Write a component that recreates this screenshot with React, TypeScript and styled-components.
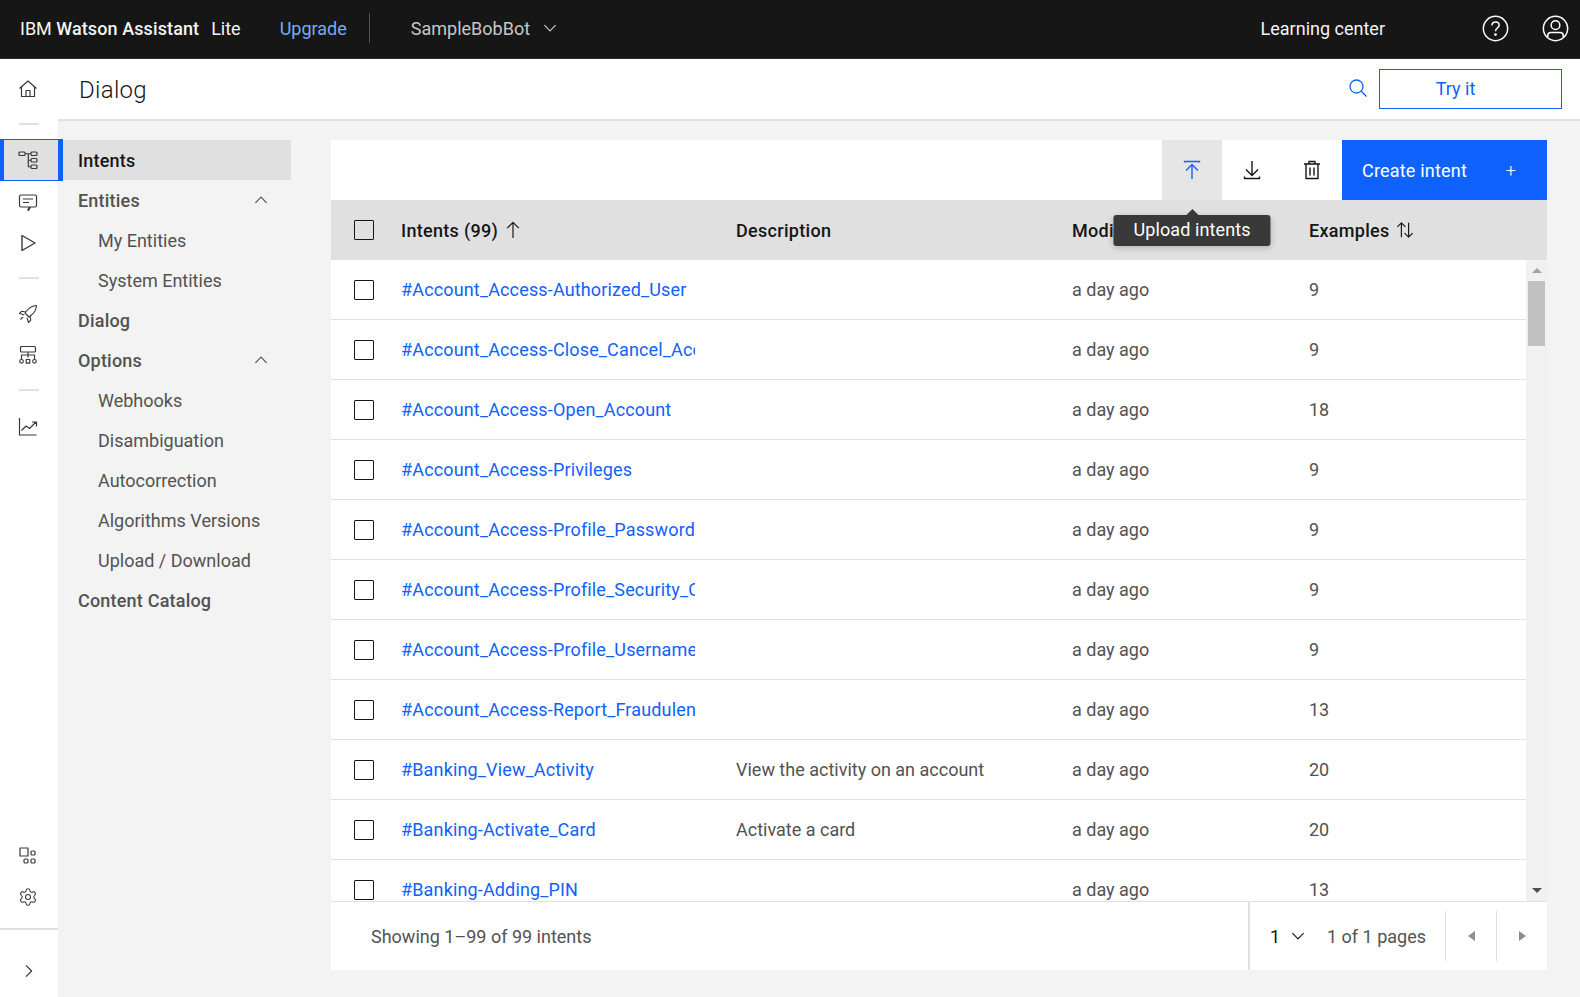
import React from "react";
import styled, { createGlobalStyle } from "styled-components";
import { Settings } from "lucide-react";

const FONT = `Roboto, "Noto Sans", sans-serif`;
const COLUMNS = "70px 335px 336px 237px 1fr";

const rows = [
  { name: "#Account_Access-Authorized_User", description: "", examples: 9 },
  { name: "#Account_Access-Close_Cancel_Account", description: "", examples: 9 },
  { name: "#Account_Access-Open_Account", description: "", examples: 18 },
  { name: "#Account_Access-Privileges", description: "", examples: 9 },
  { name: "#Account_Access-Profile_Password", description: "", examples: 9 },
  { name: "#Account_Access-Profile_Security_Questions", description: "", examples: 9 },
  { name: "#Account_Access-Profile_Username", description: "", examples: 9 },
  { name: "#Account_Access-Report_Fraudulent", description: "", examples: 13 },
  { name: "#Banking_View_Activity", description: "View the activity on an account", examples: 20 },
  { name: "#Banking-Activate_Card", description: "Activate a card", examples: 20 },
  { name: "#Banking-Adding_PIN", description: "", examples: 13 },
];

const navItems = [
  { label: "Intents", level: 0, selected: true },
  { label: "Entities", level: 0, open: true },
  { label: "My Entities", level: 1 },
  { label: "System Entities", level: 1 },
  { label: "Dialog", level: 0 },
  { label: "Options", level: 0, open: true },
  { label: "Webhooks", level: 1 },
  { label: "Disambiguation", level: 1 },
  { label: "Autocorrection", level: 1 },
  { label: "Algorithms Versions", level: 1 },
  { label: "Upload / Download", level: 1 },
  { label: "Content Catalog", level: 0 },
];

const GlobalStyle = createGlobalStyle`
  html, body {
    margin: 0;
    padding: 0;
    background: #f3f3f3;
    font-family: ${FONT};
  }
  * {
    box-sizing: border-box;
  }
`;

const Svg = ({ size = 20, color = "currentColor", width = 1.2, children }: { size?: number; color?: string; width?: number; children: React.ReactNode }) => (
  <svg width={size} height={size} viewBox="0 0 20 20" fill="none" stroke={color} strokeWidth={width} strokeLinejoin="round">
    {children}
  </svg>
);

const HomeIcon = () => (
  <Svg>
    <path d="M1.5 9.500 10 2l8.500 7.500M3.500 8v9.500h13V8M8 17.500V11.500h4v6" />
  </Svg>
);
const TreeIcon = () => (
  <Svg>
    <rect x="1" y="2" width="6" height="3.500" rx="1" />
    <rect x="13" y="2" width="6" height="3.500" rx="1" />
    <rect x="13" y="8.500" width="6" height="3.500" rx="1" />
    <rect x="13" y="15" width="6" height="3.500" rx="1" />
    <path d="M7 3.750H13M10.300 3.750V16.750H13M10.300 10.250H13" />
  </Svg>
);
const ChatIcon = () => (
  <Svg>
    <path d="M3 3h14a1.500 1.500 0 0 1 1.500 1.500v9A1.500 1.500 0 0 1 17 15h-4.500l-2 3.500-.6-.4L11.300 15H3a1.500 1.500 0 0 1-1.500-1.500v-9A1.500 1.500 0 0 1 3 3Z" />
    <path d="M5 7h10M5 10.500h6" />
  </Svg>
);
const PlayIcon = () => (
  <Svg width={1.4}>
    <path d="M4 2.500v15L17 10Z" />
  </Svg>
);
const RocketIcon = () => (
  <Svg width={1.1}>
    <path d="M18.500 1.500c-4 .3-7 1.800-9.500 5l-2 2.500 4 4 2.500-2c3.200-2.500 4.700-5.500 5-9.500Z" />
    <path d="M7.800 8 3.800 7.200 1.500 9.500 6.300 11M12 12.200l.8 4-2.300 2.300L9 13.700M5 13l-2.500 2.500" />
  </Svg>
);
const DeployIcon = () => (
  <Svg>
    <rect x="2.500" y="1.500" width="15" height="5.500" rx="1" />
    <path d="M5 4.250h.01M10 7v5.500M3.500 14.500V10h13v4.500" />
    <circle cx="3.500" cy="16.300" r="1.800" />
    <rect x="8.200" y="14.500" width="3.600" height="3.600" />
    <circle cx="16.500" cy="16.300" r="1.800" />
  </Svg>
);
const ChartIcon = () => (
  <Svg>
    <path d="M1.500 2v17h17" />
    <path d="M3.500 14.500l4.500-4.500 3.500 2.500L18 6M14 6h4.500v4.500" />
  </Svg>
);
const AppsIcon = () => (
  <Svg>
    <rect x="2" y="2" width="8" height="8" />
    <rect x="13" y="5" width="4" height="4" rx="1" />
    <rect x="6" y="13" width="4" height="4" rx="1" />
    <rect x="13" y="13" width="4" height="4" rx="1" />
  </Svg>
);
const ChevronDownIcon = ({ size = 16 }: { size?: number }) => (
  <Svg size={size} width={1.5}>
    <path d="M3 6.500 10 13.500 17 6.500" />
  </Svg>
);
const ChevronUpIcon = () => (
  <Svg size={16} width={1.5}>
    <path d="M3 13.500 10 6.500 17 13.500" />
  </Svg>
);
const ChevronRightIcon = () => (
  <Svg size={16} width={1.500}>
    <path d="M7.500 3 14.500 10 7.500 17" />
  </Svg>
);
const HelpIcon = () => (
  <Svg size={27} width={1.1}>
    <circle cx="10" cy="10" r="9" />
    <path d="M7.400 7.700c0-1.500 1.200-2.500 2.700-2.500s2.600 1 2.600 2.300c0 2.100-2.700 2.200-2.700 4.500" />
    <circle cx="10" cy="14.500" r=".5" fill="currentColor" />
  </Svg>
);
const UserIcon = () => (
  <Svg size={27} width={1.1}>
    <circle cx="10" cy="10" r="9" />
    <circle cx="10" cy="7.500" r="3.200" />
    <path d="M4.300 16.500v-1.300c0-1.300 1-2.200 2.300-2.200h6.800c1.300 0 2.300.9 2.300 2.200v1.300" />
  </Svg>
);
const SearchIcon = () => (
  <Svg size={20} width={1.3}>
    <circle cx="8.500" cy="8.500" r="6.500" />
    <path d="m13.300 13.300 5.200 5.200" />
  </Svg>
);
const UploadIcon = () => (
  <Svg width={1.4}>
    <path d="M2.500 2.500v-1h15v1M10 19V5M4 10.500 10 4.500l6 6" />
  </Svg>
);
const DownloadIcon = () => (
  <Svg width={1.4}>
    <path d="M10 1v14M4 9.500l6 6 6-6M2.500 16.500v2h15v-2" />
  </Svg>
);
const TrashIcon = () => (
  <Svg width={1.4}>
    <path d="M2 4h16M7 4V1.500h6V4M4 4v14.500h12V4M8 7.500v8M12 7.500v8" />
  </Svg>
);
const ArrowUpIcon = () => (
  <Svg size={18} width={1.300}>
    <path d="M10 19V1.500M3.500 8 10 1.500 16.500 8" />
  </Svg>
);
const SortIcon = () => (
  <Svg size={18} width={1.300}>
    <path d="M6 18V2M1.500 6.500 6 2l4.500 4.500M14 2v16M9.500 13.500 14 18l4.500-4.500" />
  </Svg>
);

const Page = styled.div`
  display: flex;
  flex-direction: column;
  height: 997px;
  overflow: hidden;
  color: #525252;
`;

const TopBar = styled.header`
  display: flex;
  align-items: center;
  flex: 0 0 59px;
  padding: 0 11px 2px 20px;
  background: #161616;
  color: #f4f4f4;
  font-size: 18px;
  border-bottom: 1px solid #2d2d2d;
`;

const Brand = styled.div`
  white-space: nowrap;

  b {
    font-weight: 500;
    letter-spacing: 0.1px;
  }
`;

const Plan = styled.span`
  margin-left: 12px;
`;

const Upgrade = styled.a`
  margin-left: 39px;
  color: #78a9ff;
`;

const BarDivider = styled.div`
  width: 1px;
  height: 30px;
  margin: 0 41px 0 22px;
  background: #525252;
`;

const BotPicker = styled.div`
  display: flex;
  align-items: center;
  gap: 12px;
  color: #c6c6c6;
`;

const LearningCenter = styled.a`
  margin-left: auto;
  margin-right: 64px;
  color: #f4f4f4;
`;

const BarIcon = styled.div`
  display: flex;
  margin-left: 33px;
  color: #ffffff;

  &:first-of-type {
    margin-left: 0;
  }
`;

const Body = styled.div`
  display: flex;
  flex: 1;
  min-height: 0;
`;

const Rail = styled.nav`
  display: flex;
  flex-direction: column;
  flex: 0 0 58px;
  width: 58px;
  min-width: 0;
  padding: 9px 0 6px;
  background: #ffffff;
  color: #393939;
`;

const RailItem = styled.div<{ $active?: boolean }>`
  display: flex;
  align-items: center;
  justify-content: center;
  position: relative;
  z-index: 1;
  flex: 0 0 ${(p) => (p.$active ? 42 : 41)}px;
  width: ${(p) => (p.$active ? 63 : 58)}px;
  padding-right: 2px;
  ${(p) =>
    p.$active &&
    `
    padding-right: 6px;
    background: #e0e0e0;
    border: 1px solid #0f62fe;
    border-left-width: 4px;
    border-right-width: 5px;
  `}
`;

const RailRule = styled.div`
  flex: 0 0 2px;
  width: 20px;
  margin: 14px 19px;
  background: #e0e0e0;
`;

const RailFoot = styled.div`
  display: flex;
  flex-direction: column;
  margin-top: auto;
`;

const RailFootRule = styled.div`
  flex: 0 0 2px;
  margin: 11px 0 20px;
  background: #e0e0e0;
`;

const Content = styled.div`
  display: flex;
  flex-direction: column;
  flex: 1;
  min-width: 0;
`;

const SubHeader = styled.div`
  display: flex;
  align-items: center;
  flex: 0 0 62px;
  padding: 0 18px 2px 21px;
  background: #ffffff;
  border-bottom: 2px solid #e0e0e0;
`;

const PageTitle = styled.h1`
  margin: 3px 0 0;
  color: #161616;
  font-size: 24px;
  font-weight: 300;
  letter-spacing: 0.3px;
`;

const SearchButton = styled.div`
  display: flex;
  margin-left: auto;
  margin-right: 11px;
  color: #0f62fe;
`;

const TryButton = styled.button`
  width: 183px;
  height: 40px;
  margin-top: 1px;
  padding: 0 30px 0 0;
  background: #ffffff;
  border: 1.5px solid #0f62fe;
  color: #0f62fe;
  font-family: ${FONT};
  font-size: 18px;
`;

const Workspace = styled.div`
  display: flex;
  flex: 1;
  min-height: 0;
  padding: 19px 33px 27px 5px;
`;

const SideNav = styled.ul`
  flex: 0 0 228px;
  margin: 0 40px 0 0;
  padding: 0;
  list-style: none;
`;

const SideNavItem = styled.li<{ $level: number; $selected?: boolean }>`
  display: flex;
  align-items: center;
  justify-content: space-between;
  height: 40px;
  padding: 0 22px 0 ${(p) => (p.$level ? 35 : 15)}px;
  font-size: 18px;
  font-weight: ${(p) => (p.$level ? 400 : 500)};
  letter-spacing: ${(p) => (p.$level ? 0 : 0.2)}px;
  color: ${(p) => (p.$selected ? "#161616" : "#525252")};
  background: ${(p) => (p.$selected ? "#e0e0e0" : "transparent")};
`;

const Main = styled.main`
  display: flex;
  flex-direction: column;
  flex: 1;
  min-width: 0;
`;

const Toolbar = styled.div`
  display: flex;
  justify-content: flex-end;
  flex: 0 0 60px;
  background: #ffffff;
`;

const ToolButton = styled.div<{ $active?: boolean }>`
  display: flex;
  align-items: center;
  justify-content: center;
  position: relative;
  width: 60px;
  color: ${(p) => (p.$active ? "#0f62fe" : "#161616")};
  background: ${(p) => (p.$active ? "#e5e5e5" : "#ffffff")};
`;

const Tooltip = styled.div`
  position: absolute;
  z-index: 3;
  top: 75px;
  left: 50%;
  transform: translateX(-50%);
  padding: 0 20px;
  height: 31px;
  line-height: 30px;
  letter-spacing: 0.1px;
  white-space: nowrap;
  border-radius: 3px;
  background: #393939;
  color: #ffffff;
  font-size: 18px;
  box-shadow: 0 2px 6px rgba(0, 0, 0, 0.2);

  &::before {
    content: "";
    position: absolute;
    top: -6px;
    left: 50%;
    margin-left: -6px;
    border: 6px solid transparent;
    border-top: 0;
    border-bottom-color: #393939;
  }
`;

const CreateButton = styled.div`
  display: flex;
  align-items: center;
  justify-content: space-between;
  width: 205px;
  padding: 0 31px 0 20px;
  background: #0f62fe;
  color: #ffffff;
  font-size: 18px;
  letter-spacing: 0.2px;

  span {
    font-weight: 300;
  }
`;

const HeaderRow = styled.div`
  display: grid;
  grid-template-columns: ${COLUMNS};
  align-items: center;
  flex: 0 0 60px;
  background: #e0e0e0;
  color: #161616;
  font-size: 18px;
  font-weight: 500;
  letter-spacing: 0.3px;
`;

const HeaderLabel = styled.div`
  display: flex;
  align-items: center;
  gap: 6px;
  white-space: nowrap;
`;

const Check = styled.span`
  display: block;
  width: 20px;
  height: 20px;
  margin-left: 23px;
  background: #ffffff;
  border: 1.5px solid #161616;
  border-radius: 1px;
`;

const HeaderCheck = styled(Check)`
  background: transparent;
`;

const ListArea = styled.div`
  display: flex;
  flex: 1;
  min-height: 0;
  background: #ffffff;
`;

const RowList = styled.div`
  flex: 1;
  min-width: 0;
  overflow: hidden;
`;

const ScrollTrack = styled.div`
  display: flex;
  flex-direction: column;
  flex: 0 0 21px;
  background: #f1f1f1;
`;

const ScrollArrow = styled.div<{ $down?: boolean }>`
  display: flex;
  align-items: center;
  justify-content: center;
  flex: 0 0 21px;
  color: ${(p) => (p.$down ? "#505050" : "#a3a3a3")};

  &::before {
    content: "";
    border: 5px solid transparent;
    border-${(p) => (p.$down ? "bottom" : "top")}-width: 0;
    border-${(p) => (p.$down ? "top" : "bottom")}-width: 5px;
    border-${(p) => (p.$down ? "top" : "bottom")}-color: currentColor;
  }
`;

const ScrollThumb = styled.div`
  flex: 0 0 65px;
  margin: 0 2px;
  background: #c1c1c1;
`;

const ScrollRest = styled.div`
  flex: 1;
`;

const Row = styled.div`
  display: grid;
  grid-template-columns: ${COLUMNS};
  align-items: center;
  height: 60px;
  border-bottom: 1px solid #e0e0e0;
  font-size: 18px;
`;

const NameCell = styled.a`
  overflow: hidden;
  margin-right: 41px;
  white-space: nowrap;
  letter-spacing: 0.15px;
  color: #0f62fe;
`;

const Footer = styled.div`
  display: flex;
  align-items: center;
  flex: 0 0 69px;
  padding-left: 40px;
  background: #ffffff;
  border-top: 1px solid #e0e0e0;
  font-size: 18px;
`;

const Pager = styled.div`
  display: flex;
  align-items: center;
  align-self: stretch;
  margin-left: auto;
  padding-left: 20px;
  border-left: 2px solid #e0e0e0;
`;

const PageSelect = styled.div`
  display: flex;
  align-items: center;
  gap: 10px;
  margin-right: 21px;
  color: #161616;
`;

const PageCount = styled.span`
  margin-right: 19px;
`;

const PagerStep = styled.div`
  display: flex;
  align-items: center;
  justify-content: center;
  width: 51px;
  height: 50px;
  border-left: 1.5px solid #e0e0e0;
  color: #8d8d8d;
`;

const Caret = styled.span<{ $right?: boolean }>`
  width: 0;
  height: 0;
  border: 5px solid transparent;
  border-${(p) => (p.$right ? "right" : "left")}-width: 0;
  border-${(p) => (p.$right ? "left" : "right")}-color: currentColor;
  border-${(p) => (p.$right ? "left" : "right")}-width: 7px;
`;

const App = () => {
  return (
    <Page>
      <GlobalStyle />
      <TopBar>
        <Brand>
          IBM <b>Watson Assistant</b>
          <Plan>Lite</Plan>
        </Brand>
        <Upgrade>Upgrade</Upgrade>
        <BarDivider />
        <BotPicker>
          SampleBobBot
          <ChevronDownIcon />
        </BotPicker>
        <LearningCenter>Learning center</LearningCenter>
        <BarIcon>
          <HelpIcon />
        </BarIcon>
        <BarIcon>
          <UserIcon />
        </BarIcon>
      </TopBar>
      <Body>
        <Rail>
          <RailItem>
            <HomeIcon />
          </RailItem>
          <RailRule />
          <RailItem $active>
            <TreeIcon />
          </RailItem>
          <RailItem>
            <ChatIcon />
          </RailItem>
          <RailItem>
            <PlayIcon />
          </RailItem>
          <RailRule />
          <RailItem>
            <RocketIcon />
          </RailItem>
          <RailItem>
            <DeployIcon />
          </RailItem>
          <RailRule />
          <RailItem>
            <ChartIcon />
          </RailItem>
          <RailFoot>
            <RailItem>
              <AppsIcon />
            </RailItem>
            <RailItem>
              <Settings size={20} strokeWidth={1.3} />
            </RailItem>
            <RailFootRule />
            <RailItem>
              <ChevronRightIcon />
            </RailItem>
          </RailFoot>
        </Rail>
        <Content>
          <SubHeader>
            <PageTitle>Dialog</PageTitle>
            <SearchButton>
              <SearchIcon />
            </SearchButton>
            <TryButton>Try it</TryButton>
          </SubHeader>
          <Workspace>
            <SideNav>
              {navItems.map((item) => (
                <SideNavItem key={item.label} $level={item.level} $selected={item.selected}>
                  {item.label}
                  {item.open && <ChevronUpIcon />}
                </SideNavItem>
              ))}
            </SideNav>
            <Main>
              <Toolbar>
                <ToolButton $active>
                  <UploadIcon />
                  <Tooltip>Upload intents</Tooltip>
                </ToolButton>
                <ToolButton>
                  <DownloadIcon />
                </ToolButton>
                <ToolButton>
                  <TrashIcon />
                </ToolButton>
                <CreateButton>
                  Create intent
                  <span>+</span>
                </CreateButton>
              </Toolbar>
              <HeaderRow>
                <HeaderCheck />
                <HeaderLabel>
                  Intents (99)
                  <ArrowUpIcon />
                </HeaderLabel>
                <HeaderLabel>Description</HeaderLabel>
                <HeaderLabel>Modified</HeaderLabel>
                <HeaderLabel>
                  Examples
                  <SortIcon />
                </HeaderLabel>
              </HeaderRow>
              <ListArea>
                <RowList>
                  {rows.map((row) => (
                    <Row key={row.name}>
                      <Check />
                      <NameCell>{row.name}</NameCell>
                      <span>{row.description}</span>
                      <span>a day ago</span>
                      <span>{row.examples}</span>
                    </Row>
                  ))}
                </RowList>
                <ScrollTrack>
                  <ScrollArrow />
                  <ScrollThumb />
                  <ScrollRest />
                  <ScrollArrow $down />
                </ScrollTrack>
              </ListArea>
              <Footer>
                Showing 1–99 of 99 intents
                <Pager>
                  <PageSelect>
                    1
                    <ChevronDownIcon />
                  </PageSelect>
                  <PageCount>1 of 1 pages</PageCount>
                  <PagerStep>
                    <Caret />
                  </PagerStep>
                  <PagerStep>
                    <Caret $right />
                  </PagerStep>
                </Pager>
              </Footer>
            </Main>
          </Workspace>
        </Content>
      </Body>
    </Page>
  );
};

export default App;
